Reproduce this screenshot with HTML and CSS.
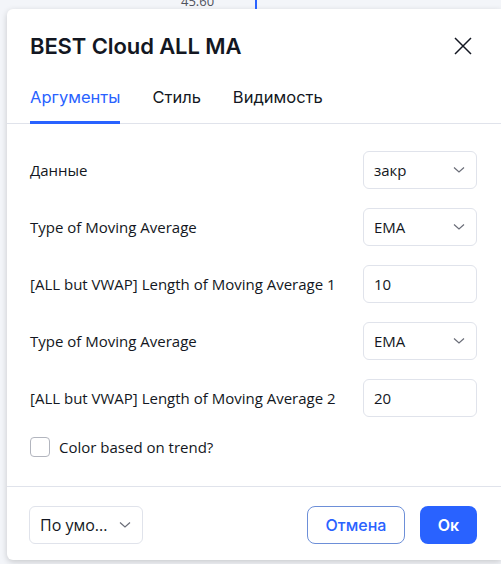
FILE: index.html
```html
<!DOCTYPE html>
<html>
<head>
    <title>BEST Cloud ALL MA</title>
    <link rel="stylesheet" href="styles.css">
</head>
<body>
    <div class="backdrop">
        <span class="price">45.60</span>
        <span class="chart-line"></span>
    </div>

    <div class="dialog">
        <div class="header">
            <h1 class="title">BEST Cloud ALL MA</h1>
            <button class="close" aria-label="close">
                <svg width="18" height="18" viewBox="0 0 18 18">
                    <path d="M1 1 L17 17 M17 1 L1 17" stroke="#131722" stroke-width="1.5" fill="none"/>
                </svg>
            </button>
        </div>

        <div class="tabs">
            <span class="tab active">Аргументы</span>
            <span class="tab">Стиль</span>
            <span class="tab">Видимость</span>
        </div>

        <div class="content">
            <div class="row">
                <span class="label">Данные</span>
                <div class="select">
                    <span>закр</span>
                    <svg class="chevron" width="12" height="8" viewBox="0 0 12 8"><path d="M1 1.5 L6 6 L11 1.5" stroke="#6a6d78" stroke-width="1.2" fill="none"/></svg>
                </div>
            </div>
            <div class="row">
                <span class="label">Type of Moving Average</span>
                <div class="select">
                    <span>EMA</span>
                    <svg class="chevron" width="12" height="8" viewBox="0 0 12 8"><path d="M1 1.5 L6 6 L11 1.5" stroke="#6a6d78" stroke-width="1.2" fill="none"/></svg>
                </div>
            </div>
            <div class="row">
                <span class="label">[ALL but VWAP] Length of Moving Average 1</span>
                <div class="select"><span>10</span></div>
            </div>
            <div class="row">
                <span class="label">Type of Moving Average</span>
                <div class="select">
                    <span>EMA</span>
                    <svg class="chevron" width="12" height="8" viewBox="0 0 12 8"><path d="M1 1.5 L6 6 L11 1.5" stroke="#6a6d78" stroke-width="1.2" fill="none"/></svg>
                </div>
            </div>
            <div class="row">
                <span class="label">[ALL but VWAP] Length of Moving Average 2</span>
                <div class="select"><span>20</span></div>
            </div>
            <label class="check-row">
                <span class="checkbox"></span>
                <span class="label">Color based on trend?</span>
            </label>
        </div>

        <div class="footer">
            <div class="select small">
                <span>По умо...</span>
                <svg class="chevron" width="12" height="8" viewBox="0 0 12 8"><path d="M1 1.5 L6 6 L11 1.5" stroke="#6a6d78" stroke-width="1.2" fill="none"/></svg>
            </div>
            <div class="buttons">
                <button class="btn cancel">Отмена</button>
                <button class="btn ok">Ок</button>
            </div>
        </div>
    </div>
</body>
</html>
```

FILE: styles.css
```css
html, body {
    margin: 0;
    padding: 0;
    overflow: hidden;
}
body {
    width: 501px;
    height: 564px;
    background: #f3f5f9;
    font-family: "Open Sans", Lato, sans-serif;
    color: #131722;
    position: relative;
}
.backdrop {
    height: 9px;
    position: relative;
}
.price {
    position: absolute;
    left: 181px;
    top: -6px;
    font-size: 13px;
    line-height: 15px;
    color: #50535e;
}
.chart-line {
    position: absolute;
    left: 255px;
    top: 0;
    width: 2px;
    height: 9px;
    background: #2962ff;
}
.dialog {
    margin-left: 7px;
    width: 494px;
    height: 551px;
    background: #fff;
    border-radius: 6px 0 0 6px;
    box-shadow: 0 2px 6px rgba(0, 0, 0, 0.18);
    display: flex;
    flex-direction: column;
}
.header {
    display: flex;
    justify-content: space-between;
    align-items: center;
    padding: 23px 29px 0 23px;
    height: 28px;
}
.title {
    margin: 0;
    font-family: Inter, Lato, sans-serif;
    font-size: 22px;
    font-weight: 600;
    line-height: 28px;
    letter-spacing: -0.1px;
}
.close {
    border: none;
    background: none;
    padding: 0;
    width: 18px;
    height: 18px;
    display: flex;
}
.tabs {
    display: flex;
    gap: 32px;
    padding: 0 23px;
    margin-top: 25px;
    border-bottom: 1px solid #e0e3eb;
}
.tab {
    font-family: Inter, Lato, sans-serif;
    font-size: 16.5px;
    line-height: 24px;
    padding-bottom: 12px;
    border-bottom: 3px solid transparent;
    margin-bottom: -1px;
}
.tab.active {
    color: #2962ff;
    border-bottom-color: #2962ff;
}
.content {
    padding: 27px 24px 29px 23px;
    display: flex;
    flex-direction: column;
    gap: 19px;
    border-bottom: 1px solid #e0e3eb;
}
.row {
    display: flex;
    justify-content: space-between;
    align-items: center;
}
.label {
    font-size: 15px;
}
.select {
    box-sizing: border-box;
    width: 114px;
    height: 38px;
    border: 1px solid #e0e3eb;
    border-radius: 6px;
    display: flex;
    align-items: center;
    justify-content: space-between;
    padding: 0 11px 0 10px;
    font-size: 15px;
}
.check-row {
    display: flex;
    align-items: center;
    gap: 9px;
    margin-top: 1px;
}
.checkbox {
    box-sizing: border-box;
    width: 20px;
    height: 20px;
    border: 1px solid #b2b5be;
    border-radius: 4px;
}
.footer {
    display: flex;
    justify-content: space-between;
    align-items: center;
    padding: 19px 24px 0 22px;
}
.select.small {
    width: 114px;
    height: 38px;
    font-size: 16px;
}
.buttons {
    display: flex;
    gap: 15px;
}
.btn {
    height: 38px;
    border-radius: 8px;
    font-family: Inter, Lato, sans-serif;
    font-size: 16px;
    font-weight: 500;
    padding: 0;
}
.cancel {
    width: 98px;
    background: #fff;
    color: #2962ff;
    border: 1px solid #6d8fd8;
}
.ok {
    width: 57px;
    background: #2962ff;
    color: #fff;
    border: none;
    font-weight: 600;
}
```
